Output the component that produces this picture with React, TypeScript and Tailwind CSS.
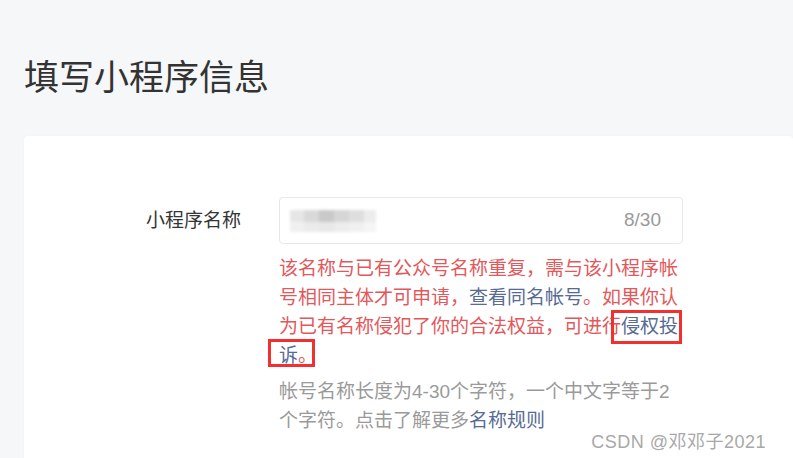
const cjk = { fontFamily: '"Liberation Sans", "Noto Sans CJK SC", sans-serif' };

export default function App() {
    return (
        <div className="relative h-[458px] w-[793px] overflow-hidden bg-[#f6f7f9]" style={cjk}>
            <h1 className="pl-[24px] pt-[56px] text-[35px] leading-[44px] font-normal text-[#333333]">填写小程序信息</h1>

            <div className="ml-[24px] mt-[36px] h-[400px] rounded-[4px] bg-white pt-[61px] shadow-[0_0_2px_rgba(0,0,0,0.04)]">
                <div className="flex">
                    <div className="w-[255px] pr-[38px] text-right text-[19px] leading-[47px] text-[#353535]">小程序名称</div>
                    <div className="w-[404px]">
                        <div className="flex h-[47px] items-center justify-between rounded-[4px] border border-[#e7e8eb] pl-[10px] pr-[21px]">
                            {/* mosaic over the name */}
                            <div className="flex flex-col blur-[1.5px]">
                                <div className="flex h-[12px]">
                                    <div className="w-[14px] bg-[#e6e6e6]" />
                                    <div className="w-[15px] bg-[#d9d9d9]" />
                                    <div className="w-[15px] bg-[#c9c9c9]" />
                                    <div className="w-[15px] bg-[#d6d6d6]" />
                                    <div className="w-[15px] bg-[#dedede]" />
                                    <div className="w-[12px] bg-[#ececec]" />
                                </div>
                                <div className="flex h-[10px]">
                                    <div className="w-[14px] bg-[#f0f0f0]" />
                                    <div className="w-[15px] bg-[#ebebeb]" />
                                    <div className="w-[15px] bg-[#e8e8e8]" />
                                    <div className="w-[15px] bg-[#ededed]" />
                                    <div className="w-[15px] bg-[#f0f0f0]" />
                                    <div className="w-[12px] bg-[#f5f5f5]" />
                                </div>
                            </div>
                            <span className="text-[19px] text-[#9a9a9a]">8/30</span>
                        </div>

                        <div className="relative mt-[10px] text-[19px] leading-[29px] text-[#e3585b]">
                            该名称与已有公众号名称重复，需与该小程序帐号相同主体才可申请，
                            <span className="text-[#576b95]">查看同名帐号</span>
                            。如果你认为已有名称侵犯了你的合法权益，可进行
                            <span className="text-[#576b95]">侵权投诉</span>
                            。
                            <div className="absolute left-[332px] top-[56px] h-[34px] w-[71px] border-[3px] border-[#f23030]" />
                            <div className="absolute left-[-11px] top-[85px] h-[28px] w-[47px] border-[3px] border-[#f23030]" />
                        </div>

                        <div className="mt-[7px] text-[19px] leading-[29px] text-[#9a9a9a]">
                            帐号名称长度为4-30个字符，一个中文字等于2个字符。点击了解更多
                            <span className="text-[#576b95]">名称规则</span>
                        </div>
                    </div>
                </div>
            </div>

            <div className="absolute bottom-[6px] right-[27px] text-[18px] leading-[20px] tracking-[0.5px] text-[#a8a8a8] [text-shadow:0_0_2px_#fff]">
                CSDN @邓邓子2021
            </div>
        </div>
    );
}
